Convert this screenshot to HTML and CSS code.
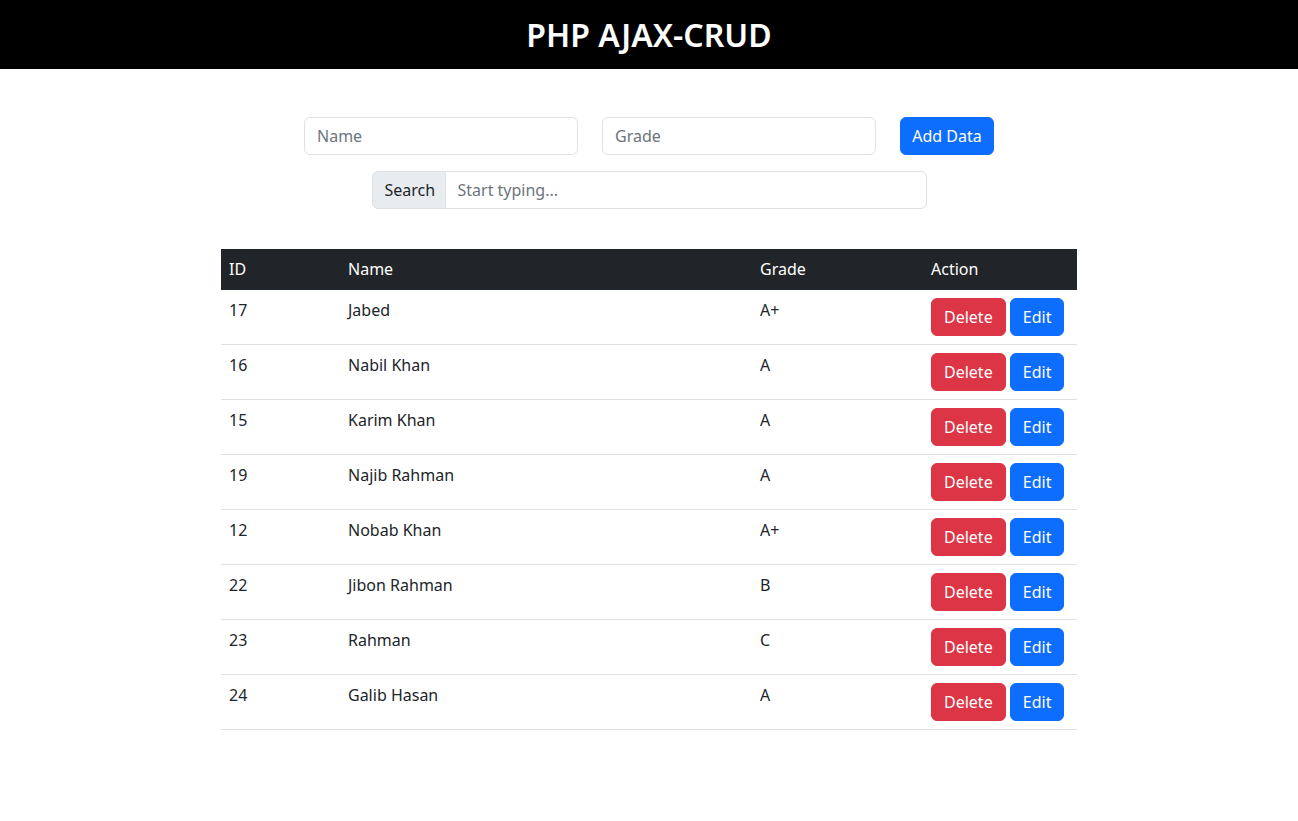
FILE: index.html
```html
<!DOCTYPE html>
<html lang="en">
<head>
<meta charset="utf-8">
<title>PHP AJAX-CRUD</title>
<link rel="stylesheet" href="styles.css">
</head>
<body>
<header class="topbar">
  <h2 class="title">PHP AJAX-CRUD</h2>
</header>
<main class="content">
  <form class="add-row">
    <input class="form-control field" type="text" placeholder="Name">
    <input class="form-control field" type="text" placeholder="Grade">
    <button type="button" class="btn btn-primary add-btn">Add Data</button>
  </form>
  <div class="search-group">
    <span class="addon">Search</span>
    <input class="form-control search-input" type="text" placeholder="Start typing...">
  </div>
  <table class="data-table">
    <thead>
      <tr><th class="c-id">ID</th><th class="c-name">Name</th><th class="c-grade">Grade</th><th class="c-act">Action</th></tr>
    </thead>
    <tbody>
      <tr><td>17</td><td>Jabed</td><td>A+</td><td><button class="btn btn-danger">Delete</button> <button class="btn btn-primary">Edit</button></td></tr>
      <tr><td>16</td><td>Nabil Khan</td><td>A</td><td><button class="btn btn-danger">Delete</button> <button class="btn btn-primary">Edit</button></td></tr>
      <tr><td>15</td><td>Karim Khan</td><td>A</td><td><button class="btn btn-danger">Delete</button> <button class="btn btn-primary">Edit</button></td></tr>
      <tr><td>19</td><td>Najib Rahman</td><td>A</td><td><button class="btn btn-danger">Delete</button> <button class="btn btn-primary">Edit</button></td></tr>
      <tr><td>12</td><td>Nobab Khan</td><td>A+</td><td><button class="btn btn-danger">Delete</button> <button class="btn btn-primary">Edit</button></td></tr>
      <tr><td>22</td><td>Jibon Rahman</td><td>B</td><td><button class="btn btn-danger">Delete</button> <button class="btn btn-primary">Edit</button></td></tr>
      <tr><td>23</td><td>Rahman</td><td>C</td><td><button class="btn btn-danger">Delete</button> <button class="btn btn-primary">Edit</button></td></tr>
      <tr><td>24</td><td>Galib Hasan</td><td>A</td><td><button class="btn btn-danger">Delete</button> <button class="btn btn-primary">Edit</button></td></tr>
    </tbody>
  </table>
</main>
</body>
</html>
```
FILE: styles.css
```css
* { box-sizing: border-box; }
html, body { margin: 0; padding: 0; }
body {
  font-family: "Noto Sans", "Open Sans", sans-serif;
  font-size: 16px;
  line-height: 24px;
  color: #212529;
  background: #fff;
}
.topbar {
  height: 69px;
  background: #000;
  display: flex;
  align-items: center;
  justify-content: center;
}
.title {
  margin: 0;
  color: #fff;
  font-size: 32px;
  font-weight: 600;
  line-height: 38px;
}
.content {
  width: 856px;
  margin: 0 auto;
  padding-top: 48px;
}
.add-row {
  display: flex;
  justify-content: center;
  gap: 24px;
  margin: 0;
}
.form-control {
  font-family: inherit;
  font-size: 16px;
  height: 38px;
  padding: 6px 12px;
  color: #212529;
  border: 1px solid #dee2e6;
  border-radius: 6px;
  background: #fff;
  outline: none;
}
.form-control::placeholder { color: #6c757d; }
.field { width: 274px; }
.btn {
  font-family: inherit;
  font-size: 16px;
  line-height: 24px;
  height: 38px;
  padding: 6px 12px;
  border: 1px solid transparent;
  border-radius: 6px;
  color: #fff;
  cursor: pointer;
  vertical-align: middle;
}
.btn-primary { background: #0d6efd; border-color: #0d6efd; }
.btn-danger { background: #dc3545; border-color: #dc3545; }
.add-btn { width: 94px; padding: 6px 0; }
.search-group {
  display: flex;
  width: 555px;
  margin: 16px auto 0;
}
.addon {
  display: flex;
  align-items: center;
  width: 74px;
  height: 38px;
  padding: 0 12px;
  background: #e9ecef;
  border: 1px solid #dee2e6;
  border-radius: 6px 0 0 6px;
}
.search-input {
  flex: 1;
  margin-left: -1px;
  border-radius: 0 6px 6px 0;
}
.data-table {
  width: 856px;
  margin-top: 40px;
  border-collapse: collapse;
}
.data-table th, .data-table td {
  text-align: left;
  vertical-align: top;
  padding: 8px;
  border-bottom: 1px solid #dee2e6;
}
.data-table th {
  background: #212529;
  color: #fff;
  font-weight: 400;
  border-bottom-color: #212529;
}
.c-id { width: 119px; }
.c-name { width: 412px; }
.c-grade { width: 171px; }
.c-act { width: 154px; }
```
